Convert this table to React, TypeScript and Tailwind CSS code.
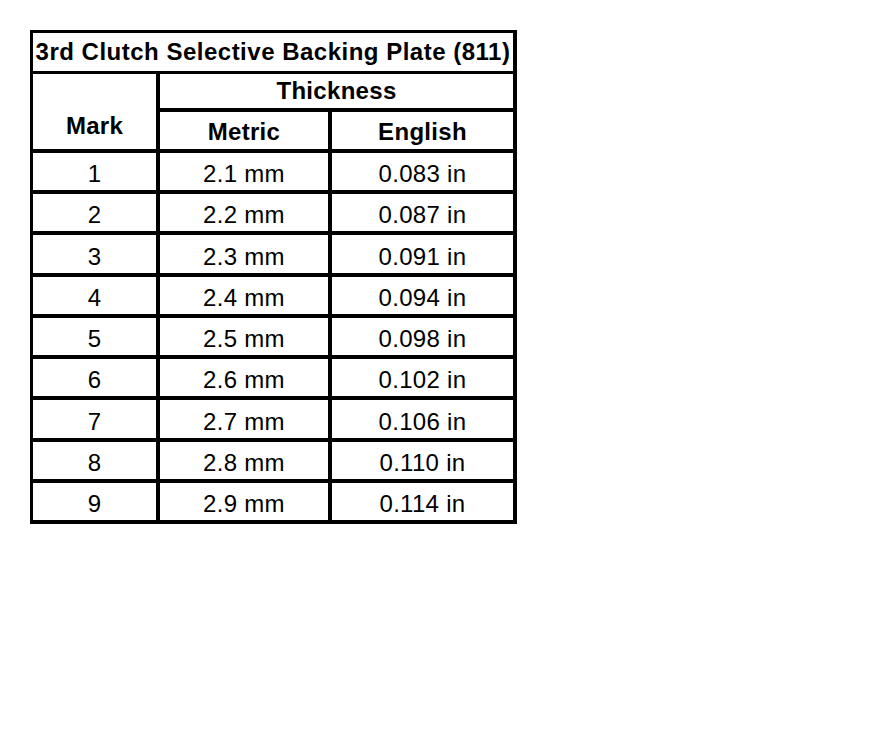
import React from "react";

const rows: [string, string, string][] = [
  ["1", "2.1 mm", "0.083 in"],
  ["2", "2.2 mm", "0.087 in"],
  ["3", "2.3 mm", "0.091 in"],
  ["4", "2.4 mm", "0.094 in"],
  ["5", "2.5 mm", "0.098 in"],
  ["6", "2.6 mm", "0.102 in"],
  ["7", "2.7 mm", "0.106 in"],
  ["8", "2.8 mm", "0.110 in"],
  ["9", "2.9 mm", "0.114 in"],
];

export default function App() {
  return (
    <div
      className="w-[896px] h-[738px] bg-white pl-[30px] pt-[30px] text-black"
      style={{ fontFamily: '"Liberation Sans", Arial, sans-serif' }}
    >
      <div className="w-[487px] border-l-[3px] border-t-[3px] border-r-4 border-black grid grid-cols-[127px_172px_181px] text-[24px] leading-[28px] tracking-[0.3px]">
        <div className="col-span-3 h-[41px] border-b-[3px] border-black flex items-center justify-center font-bold tracking-[0.5px] whitespace-nowrap">
          3rd Clutch Selective Backing Plate (811)
        </div>
        <div className="row-span-2 border-r-4 border-b-4 border-black flex items-center justify-center pt-[29px] font-bold">
          Mark
        </div>
        <div className="col-span-2 h-[38px] border-b-4 border-black flex items-center justify-center font-bold">
          Thickness
        </div>
        <div className="h-[41px] border-r-4 border-b-4 border-black flex items-center justify-center pt-[3px] font-bold">
          Metric
        </div>
        <div className="h-[41px] border-b-4 border-black flex items-center justify-center pt-[3px] font-bold">
          English
        </div>
        {rows.map(([m, mm, inch]) => {
          const tall = m === "3" || m === "7";
          const h = tall ? "h-[42px]" : "h-[41px]";
          return (
            <React.Fragment key={m}>
              <div className={`${h} border-r-4 border-b-4 border-black flex items-center justify-center pt-[5px]`}>
                {m}
              </div>
              <div className={`${h} border-r-4 border-b-4 border-black flex items-center justify-center pt-[5px]`}>
                {mm}
              </div>
              <div className={`${h} border-b-4 border-black flex items-center justify-center pt-[5px]`}>
                {inch}
              </div>
            </React.Fragment>
          );
        })}
      </div>
    </div>
  );
}
